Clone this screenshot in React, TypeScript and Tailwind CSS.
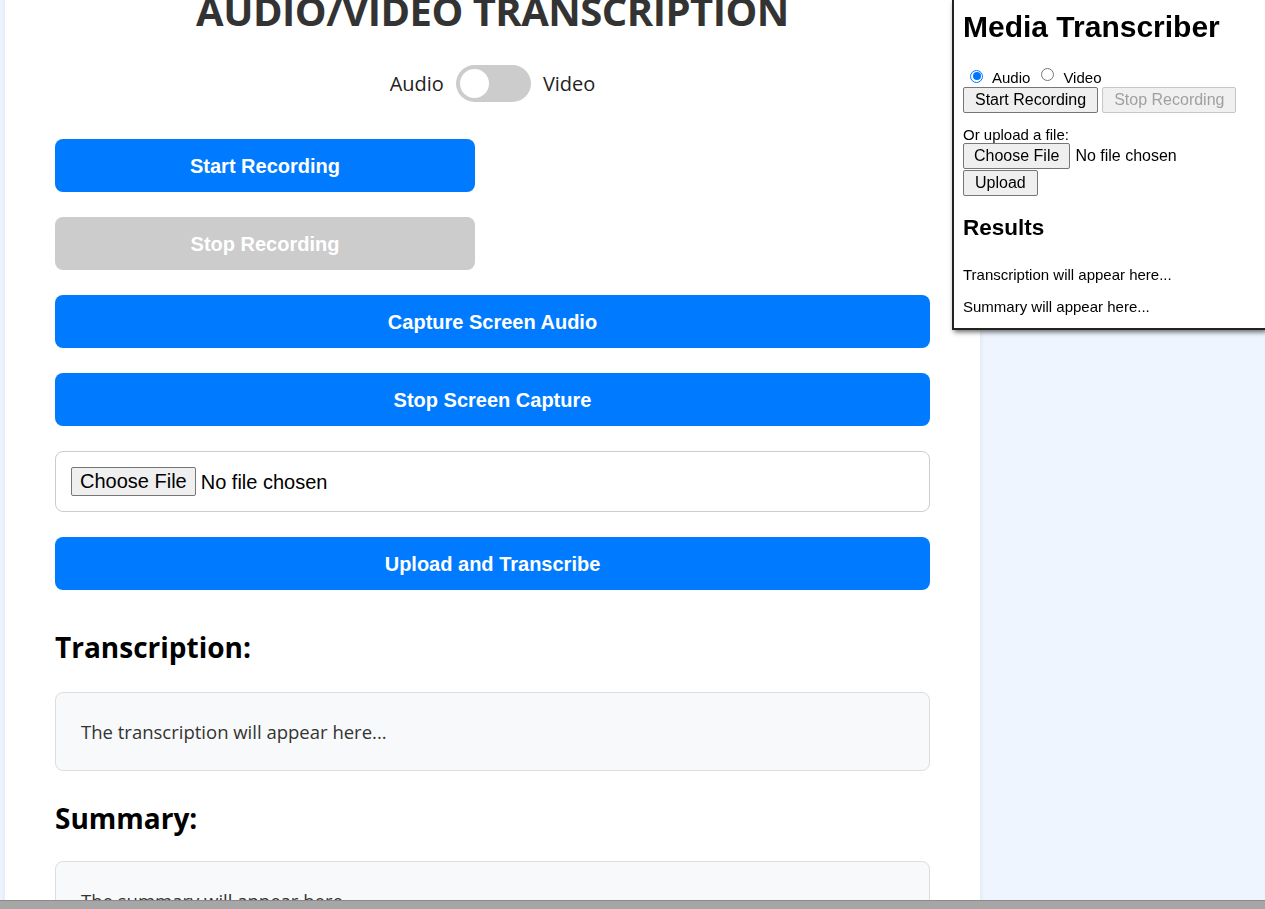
import { useState } from "react";

function Toggle() {
  const [video, setVideo] = useState(false);
  return (
    <div className="flex items-center justify-center gap-3 text-[20px] text-[#222]">
      <span>Audio</span>
      <button
        onClick={() => setVideo(!video)}
        className={`relative h-[37px] w-[75px] rounded-full ${video ? "bg-[#007bff]" : "bg-[#ccc]"}`}
      >
        <span
          className={`absolute top-[4px] h-[29px] w-[29px] rounded-full bg-white ${video ? "left-[42px]" : "left-[4px]"}`}
        />
      </button>
      <span>Video</span>
    </div>
  );
}

function BigButton({ label, wide, disabled }: { label: string; wide?: boolean; disabled?: boolean }) {
  return (
    <button
      disabled={disabled}
      className={`h-[53px] rounded-[8px] text-[20px] font-bold text-white font-['Liberation_Sans',Arial,sans-serif] ${
        wide ? "w-full" : "w-[420px]"
      } ${disabled ? "bg-[#ccc]" : "bg-[#007bff]"}`}
    >
      {label}
    </button>
  );
}

function FileButton({ big }: { big?: boolean }) {
  return (
    <div className="flex items-center font-['Liberation_Sans',Arial,sans-serif]">
      <span
        className={`rounded-[2px] border border-[#767676] bg-[#efefef] text-black ${
          big ? "h-[29px] px-[8px] text-[20px] leading-[27px]" : "h-[26px] px-[10px] text-[16px] leading-[24px]"
        }`}
      >
        Choose File
      </span>
      <span className={big ? "ml-[5px] text-[20px] text-black" : "ml-[5px] text-[16px] text-black"}>
        No file chosen
      </span>
    </div>
  );
}

function SmallButton({ label, disabled }: { label: string; disabled?: boolean }) {
  return (
    <button
      disabled={disabled}
      className={`h-[26px] rounded-[2px] border px-[11px] text-[16px] leading-[24px] ${
        disabled ? "border-[#c6c6c6] bg-[#f0f0f0] text-[#a0a0a0]" : "border-[#767676] bg-[#efefef] text-black"
      }`}
    >
      {label}
    </button>
  );
}

function Radio({ checked }: { checked?: boolean }) {
  return (
    <span
      className={`inline-flex h-[13px] w-[13px] items-center justify-center rounded-full border ${
        checked ? "border-[#0075ff]" : "border-[#767676]"
      }`}
    >
      {checked && <span className="h-[8px] w-[8px] rounded-full bg-[#0075ff]" />}
    </span>
  );
}

function SidePanel() {
  return (
    <div className="fixed right-0 top-0 w-[313px] border-b-2 border-l-2 border-[#222] bg-white pb-[13px] pl-[9px] font-['Liberation_Sans',Arial,sans-serif] text-black shadow-[2px_2px_5px_rgba(0,0,0,0.6)]">
      <h1 className="mt-[9px] text-[30px] font-bold leading-[36px]">Media Transcriber</h1>
      <div className="mt-[21px] flex items-center pl-[7px] text-[15px] leading-[16px]">
        <Radio checked />
        <span className="ml-[9px] mt-[4px]">Audio</span>
        <span className="ml-[11px]">
          <Radio />
        </span>
        <span className="ml-[9px] mt-[4px]">Video</span>
      </div>
      <div className="mt-[1px] flex gap-[4px]">
        <SmallButton label="Start Recording" />
        <SmallButton label="Stop Recording" disabled />
      </div>
      <p className="mt-[13px] text-[15px] leading-[17px]">Or upload a file:</p>
      <FileButton />
      <div className="mt-[1px]">
        <SmallButton label="Upload" />
      </div>
      <h2 className="mt-[18px] text-[22.5px] font-bold leading-[28px]">Results</h2>
      <p className="mt-[24px] text-[15px] leading-[17px]">Transcription will appear here...</p>
      <p className="mt-[15px] text-[15px] leading-[17px]">Summary will appear here...</p>
    </div>
  );
}

export default function App() {
  return (
    <div className="min-h-[909px] overflow-hidden bg-[#eef5fe] font-['Segoe_UI','Open_Sans','Noto_Sans',sans-serif]">
      <div className="ml-[5px] w-[975px] bg-white px-[50px] pb-[40px] shadow-[0_0_6px_rgba(0,0,0,0.08)]">
        <h1 className="-mt-[13px] text-center text-[40px] font-bold leading-[48px] tracking-[-0.5px] text-[#333]">
          AUDIO/VIDEO TRANSCRIPTION
        </h1>
        <div className="mt-[30px]">
          <Toggle />
        </div>
        <div className="mt-[37px] flex flex-col gap-[25px]">
          <BigButton label="Start Recording" />
          <BigButton label="Stop Recording" disabled />
          <BigButton label="Capture Screen Audio" wide />
          <BigButton label="Stop Screen Capture" wide />
          <div className="flex h-[61px] items-center rounded-[8px] border border-[#ccc] px-[15px]">
            <FileButton big />
          </div>
          <BigButton label="Upload and Transcribe" wide />
        </div>
        <h2 className="mt-[37px] text-[28px] font-bold leading-[40px] text-black">Transcription:</h2>
        <div className="mt-[25px] rounded-[8px] border border-[#ddd] bg-[#f8f9fa] px-[25px] py-[25px] text-[18.5px] leading-[27px] text-[#333]">
          The transcription will appear here...
        </div>
        <h2 className="mt-[27px] text-[28px] font-bold leading-[40px] text-black">Summary:</h2>
        <div className="mt-[23px] rounded-[8px] border border-[#ddd] bg-[#f8f9fa] px-[25px] py-[25px] text-[18.5px] leading-[27px] text-[#333]">
          The summary will appear here...
        </div>
      </div>
      <SidePanel />
      <div className="fixed bottom-0 left-0 h-[9px] w-full border-t border-[#8a8a8a] bg-[#a6a6a6]" />
    </div>
  );
}
